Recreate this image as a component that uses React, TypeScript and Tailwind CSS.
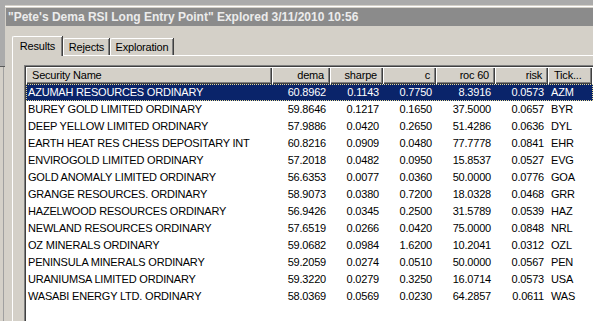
const columns = [
    { label: "Security Name", align: "left" },
    { label: "dema", align: "right" },
    { label: "sharpe", align: "right" },
    { label: "c", align: "right" },
    { label: "roc 60", align: "right" },
    { label: "risk", align: "right" },
    { label: "Tick...", align: "left" },
];

const rows = [
    ["AZUMAH RESOURCES ORDINARY", "60.8962", "0.1143", "0.7750", "8.3916", "0.0573", "AZM"],
    ["BUREY GOLD LIMITED ORDINARY", "59.8646", "0.1217", "0.1650", "37.5000", "0.0657", "BYR"],
    ["DEEP YELLOW LIMITED ORDINARY", "57.9886", "0.0420", "0.2650", "51.4286", "0.0636", "DYL"],
    ["EARTH HEAT RES CHESS DEPOSITARY INT", "60.8216", "0.0909", "0.0480", "77.7778", "0.0841", "EHR"],
    ["ENVIROGOLD LIMITED ORDINARY", "57.2018", "0.0482", "0.0950", "15.8537", "0.0527", "EVG"],
    ["GOLD ANOMALY LIMITED ORDINARY", "56.6353", "0.0077", "0.0360", "50.0000", "0.0776", "GOA"],
    ["GRANGE RESOURCES. ORDINARY", "58.9073", "0.0380", "0.7200", "18.0328", "0.0468", "GRR"],
    ["HAZELWOOD RESOURCES ORDINARY", "56.9426", "0.0345", "0.2500", "31.5789", "0.0539", "HAZ"],
    ["NEWLAND RESOURCES ORDINARY", "57.6519", "0.0266", "0.0420", "75.0000", "0.0848", "NRL"],
    ["OZ MINERALS ORDINARY", "59.0682", "0.0984", "1.6200", "10.2041", "0.0312", "OZL"],
    ["PENINSULA MINERALS ORDINARY", "59.2059", "0.0274", "0.0510", "50.0000", "0.0567", "PEN"],
    ["URANIUMSA LIMITED ORDINARY", "59.3220", "0.0279", "0.3250", "16.0714", "0.0573", "USA"],
    ["WASABI ENERGY LTD. ORDINARY", "58.0369", "0.0569", "0.0230", "64.2857", "0.0611", "WAS"],
];

const gridCols = "grid grid-cols-[246px_58px_53px_53px_59px_53px_44px_1fr]";

const Tab = ({ label, active, width }: { label: string; active?: boolean; width: string }) => (
    <div
        className={
            active
                ? `${width} relative z-10 -mb-px h-[20px] flex items-center justify-center bg-[#d4d0c8] border-l border-t border-white rounded-tl-[2px] shadow-[inset_-1px_0_0_#808080,1px_0_0_#404040]`
                : `${width} h-[17px] flex items-center justify-center bg-[#d4d0c8] border-l border-t border-white rounded-tl-[2px] shadow-[inset_-1px_0_0_#808080,1px_0_0_#404040]`
        }
    >
        {label}
    </div>
);

export default function App() {
    return (
        <div className="w-[593px] h-[321px] overflow-hidden flex bg-[#d4d0c8] text-black text-[11px] tracking-[-0.2px] font-['Liberation_Sans',Arial,sans-serif]">
            {/* window behind, left edge */}
            <div className="w-[5px] flex flex-col shrink-0">
                <div className="h-[67px] bg-[#ababab] border-b border-[#5a5a5a]" />
                <div className="flex-1 ml-[3px] border-l border-[#a0a0a0]" />
            </div>

            <div className="flex-1 flex flex-col min-w-0">
                <div className="h-[5px] bg-[#ababab] shrink-0" />
                <div className="flex-1 flex flex-col border-t border-[#d4d0c8]">
                    <div className="border-t border-white pt-px">
                        <div className="h-[18px] ml-px bg-[#8b8b8b] text-[#ececec] font-bold text-[12px] tracking-normal leading-[18px] pl-[2px] whitespace-nowrap">
                            "Pete's Dema RSI Long Entry Point" Explored 3/11/2010 10:56
                        </div>
                    </div>

                    <div className="flex-1 flex flex-col pl-[7px] pt-[9px]">
                        <div className="flex items-end h-[20px]">
                            <Tab label="Results" active width="w-[50px]" />
                            <Tab label="Rejects" width="w-[46px] ml-px" />
                            <Tab label="Exploration" width="w-[63px] ml-px" />
                        </div>

                        <div className="flex-1 flex flex-col border-t border-l border-white pl-[11px] pt-[9px]">
                            <div className="flex-1 border-t border-l border-[#808080]">
                                <div className="h-full border-t border-l border-[#404040] bg-white">
                                    <div className={`${gridCols} h-[17px]`}>
                                        {columns.map((col) => (
                                            <div
                                                key={col.label}
                                                className={`bg-[#d4d0c8] leading-[16px] shadow-[inset_1px_1px_0_#fff,inset_-1px_-1px_0_#404040,inset_-2px_-2px_0_#808080] ${col.align === "right" ? "text-right pr-[6px]" : "text-left pl-[6px]"}`}
                                            >
                                                {col.label}
                                            </div>
                                        ))}
                                        <div className="bg-[#d4d0c8] shadow-[inset_1px_1px_0_#fff]" />
                                    </div>

                                    {rows.map((row, i) => (
                                        <div
                                            key={row[0]}
                                            className={
                                                i === 0
                                                    ? `${gridCols} h-[17px] leading-[17px] bg-[#0a246a] text-white outline-1 outline-dotted outline-[#e8dc96] -outline-offset-1`
                                                    : `${gridCols} h-[17px] leading-[17px]`
                                            }
                                        >
                                            {row.map((cell, j) => (
                                                <div
                                                    key={j}
                                                    className={
                                                        j === 0
                                                            ? "pl-[2px] whitespace-nowrap overflow-hidden"
                                                            : j === 6
                                                                ? "pl-[3px] whitespace-nowrap overflow-hidden"
                                                                : "text-right pr-[4px] whitespace-nowrap"
                                                    }
                                                >
                                                    {cell}
                                                </div>
                                            ))}
                                        </div>
                                    ))}
                                </div>
                            </div>
                        </div>
                    </div>
                </div>
            </div>
        </div>
    );
}
